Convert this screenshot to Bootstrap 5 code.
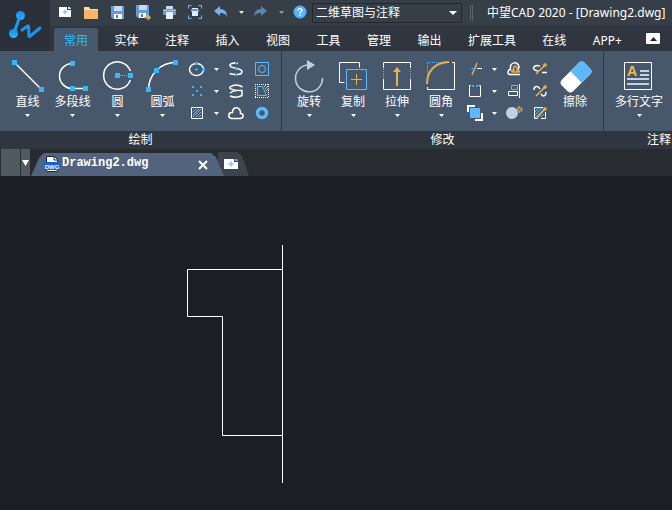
<!DOCTYPE html>
<html lang="zh-CN">
<head>
<meta charset="utf-8">
<meta name="viewport" content="width=device-width, initial-scale=1">
<title>中望CAD 2020 - [Drawing2.dwg]</title>
<link href="https://cdn.jsdelivr.net/npm/bootstrap@5.3.0/dist/css/bootstrap.min.css" rel="stylesheet">
<style>
:root{--panel:#47586d;--bar:#363e47;--strip:#30363f;--blue:#33b9f7;--sky:#5fb8fb;--gold:#eab04a;--pale:#bcd0e6}
body{background:#1b1f24;color:#fff;font:12px/18px "Noto Sans","Noto Sans CJK SC",sans-serif;overflow:hidden}
button{background:none;border:0;padding:0;color:inherit;font:inherit}
svg{display:block;fill:none;flex:none}
.logo-box{width:50px;background:#2a303a}
.quickbar{height:26px;background:var(--bar);padding-left:2px}
.quick-btn{width:26px;height:24px;display:flex;align-items:center;justify-content:center;flex:none}
.caret-btn{width:14px;height:24px;display:flex;align-items:center;justify-content:center;flex:none}
.quick-btn.help{width:24px}
.workspace select{width:150px;height:20px;appearance:none;background:#363e47;border:1px solid #23282f;color:#fff;padding:0 20px 0 3px;font:12px/18px "Noto Sans","Noto Sans CJK SC",sans-serif}
.workspace svg{position:absolute;right:5px;top:8px;pointer-events:none}
.grip{width:3px;height:16px;border:solid #5a626c;border-width:0 1px;margin:0 14px 0 8px;flex:none}
.tabrow{height:25px;background:var(--strip);padding-left:4px}
.ribbon-tabs{max-width:578px}
.ribbon-tabs button{padding:3px 10px 0;height:23px;border-radius:3px 3px 0 0;line-height:20px}
.ribbon-tabs .current{background:var(--panel);color:var(--blue)}
.collapse-btn{width:14px;height:11px;background:#fff;border-radius:1px;margin:7px 12px 7px 14px}
.panel-box{border-right:1px solid #30363f}
.panel-body{background:var(--panel);height:80px;padding:7px 6px 0 5px}
.panel-name{background:var(--strip);height:18px;line-height:18px;text-align:center}
.annotate-box{min-width:110px}
.big-tool{display:flex;flex-direction:column;align-items:center}
.big-tool .caret{margin-top:3px}
.tool-grid{display:grid;grid-template-columns:24px 14px 26px 26px;grid-auto-rows:22px}
.tool-grid button{display:flex;align-items:center;justify-content:center}
.docbar{height:27px;background:#282b30;padding-left:1px}
.doc-block{width:19px;background:#4f5b60;margin-right:1px}
.doc-menu{width:9px;background:#4f5b60;display:flex;align-items:center;justify-content:center;margin-right:1px}
.doc-tab{position:relative;z-index:1;width:193px;height:23px;background:#52647d;padding:0 16px 0 13px;clip-path:polygon(0 100%,8px 5px,13px 0,calc(100% - 13px) 0,calc(100% - 8px) 4px,100% 100%)}
.doc-name{font:bold 12px/20px "Liberation Mono",monospace;padding-left:2px}
.doc-new{width:31px;height:24px;background:#3d444d;margin-left:-6px;padding-right:6px;clip-path:polygon(0 0,19px 0,24px 4px,100% 100%,0 100%);display:flex;align-items:center;justify-content:center}
.drawing-area{padding:69px 0 0 187px}
.s{stroke:#fff}.b{stroke:var(--sky)}.g{stroke:var(--gold)}.bf{fill:var(--blue)}
</style>
<script src="https://cdn.jsdelivr.net/npm/bootstrap@5.3.0/dist/js/bootstrap.bundle.min.js"></script>
</head>
<body>
<header class="d-flex">
  <div class="logo-box flex-shrink-0">
    <svg width="50" height="51" viewBox="0 0 50 51"><defs><linearGradient id="lg" x1="0" y1="1" x2="0" y2="0"><stop offset="0" stop-color="#2dbcf8"/><stop offset="1" stop-color="#1687f5"/></linearGradient></defs><g fill="url(#lg)"><circle cx="20.5" cy="15.5" r="4.500"/><circle cx="13.500" cy="33.500" r="4.500"/></g><path d="M20 16L14 33" stroke="#1c9bf6" stroke-width="3"/><path d="M22 30L28.500 25.500L29 37L40 28" stroke="#1c95f0" stroke-width="3" stroke-linecap="round" stroke-linejoin="bevel"/></svg>
  </div>
  <div class="flex-grow-1 overflow-hidden">
    <div class="quickbar d-flex align-items-start text-nowrap">
      <button class="quick-btn" aria-label="新建"><svg width="14" height="12"><path d="M1 1h8v3h4v7H1z" fill="#fff"/><path d="M10 1h2l1 2h-3z" fill="#cfe5f6"/><path d="M7 3.500v5M4.500 6h5" class="b"/></svg></button>
      <button class="quick-btn" aria-label="打开"><svg width="15" height="13"><path d="M0 1h5l1 2h8v10H0z" fill="#f7b56c"/><path d="M0 1h5l1 2h8v1H0z" fill="#fbe3a2"/></svg></button>
      <button class="quick-btn" aria-label="保存"><svg width="13" height="13"><path d="M0 0h13v13H2l-2-2z" fill="#649bd8"/><path d="M3 0h8v5H3z" fill="#c9daf2"/><path d="M3 8h8v5H3z" fill="#fff"/><path d="M5 9h2v3H5z" fill="#4b7db8"/></svg></button>
      <button class="quick-btn" aria-label="另存为"><svg width="15" height="15"><path d="M0 0h13v13H2l-2-2z" fill="#649bd8"/><path d="M3 0h8v5H3z" fill="#c9daf2"/><path d="M3 8h7v5H3z" fill="#fff"/><path d="M5 9h2v3H5z" fill="#4b7db8"/><path d="M8 12.500h6M11.500 10l2.500 2.500-2.500 2.500" stroke="#f0b04f" stroke-width="1.500"/></svg></button>
      <button class="quick-btn" aria-label="打印"><svg width="13" height="13"><path d="M3 0h7v4H3z" fill="#c9daf2"/><path d="M0 3h13v6H0z" fill="#649bd8"/><path d="M1 4h11v1H1z" fill="#a6c9ee"/><path d="M3 6h7v7H3z" fill="#e8f0fb"/></svg></button>
      <button class="quick-btn" aria-label="打印预览"><svg width="14" height="14"><path d="M.5 3.500v-3h3M10.500.5h3v3M13.500 10.500v3h-3M3.500 13.500h-3v-3" stroke="#75b9ee"/><path d="M3 4h8v3H3z" fill="#649bd8"/><path d="M4 3h6v1H4zM4 6h6v5H4z" fill="#dfeafa"/></svg></button>
      <button class="quick-btn" aria-label="撤销"><svg width="14" height="12"><path d="M0 5l6-5v3c5 0 7 3 7 8-1-3-3-4-7-4v3z" fill="#74b3f2"/></svg></button>
      <button class="caret-btn" aria-label="撤销列表"><svg width="5" height="3"><path d="M0 0h5L2.500 3z" fill="#e6e9ee"/></svg></button>
      <button class="quick-btn" aria-label="重做"><svg width="14" height="12"><path d="M13 5L7 0v3C2 3 0 6 0 11c1-3 3-4 7-4v3z" fill="#5f84ab"/></svg></button>
      <button class="caret-btn" aria-label="重做列表"><svg width="5" height="3"><path d="M0 0h5L2.500 3z" fill="#979ca4"/></svg></button>
      <button class="quick-btn help" aria-label="帮助"><svg width="14" height="14"><circle cx="7" cy="7" r="6.500" fill="#55b4fb"/><path d="M5 5.500C5 3 9 3 9 5.300c0 1.300-2 1.400-2 3.200M7 9.500v1.500" stroke="#fff" stroke-width="1.300"/></svg></button>
      <div class="workspace position-relative align-self-center"><select aria-label="工作空间"><option>二维草图与注释</option></select><svg width="8" height="4"><path d="M0 0h8L4 4z" fill="#fff"/></svg></div>
      <div class="grip align-self-center"></div>
      <div class="align-self-center">中望CAD 2020 - [Drawing2.dwg]</div>
    </div>
    <div class="tabrow d-flex">
      <nav class="ribbon-tabs d-flex flex-grow-1 justify-content-between align-items-end text-nowrap" aria-label="功能区">
        <button class="current">常用</button><button>实体</button><button>注释</button><button>插入</button><button>视图</button><button>工具</button><button>管理</button><button>输出</button><button>扩展工具</button><button>在线</button><button>APP+</button>
      </nav>
      <button class="collapse-btn d-flex align-items-center justify-content-center flex-shrink-0" aria-label="收起功能区"><svg width="7" height="4"><path d="M0 4h7L3.500 0z" fill="#23282f"/></svg></button>
    </div>
  </div>
</header>

<main>
<div class="d-flex overflow-hidden text-nowrap">
  <section class="panel-box flex-shrink-0">
    <div class="panel-body d-flex">
      <button class="big-tool"><svg width="45" height="35"><path d="M9.500 4.500l27 27" class="s" stroke-width="1.500"/><path d="M7 2h5v5H7zM34 29h5v5h-5z" class="bf"/></svg><span>直线</span><svg class="caret" width="5" height="3"><path d="M0 0h5L2.500 3z" fill="#fff"/></svg></button>
      <button class="big-tool"><svg width="45" height="35"><path d="M22.500 5.500A13 12.500 0 0 0 22.500 30.500H35" class="s" stroke-width="1.500"/><path d="M20 3h5v5h-5zM20 28h5v5h-5zM33 28h5v5h-5z" class="bf"/></svg><span>多段线</span><svg class="caret" width="5" height="3"><path d="M0 0h5L2.500 3z" fill="#fff"/></svg></button>
      <button class="big-tool"><svg width="45" height="35"><path d="M35.300 13A13.700 13.700 0 1 0 35.300 22" class="s" stroke-width="1.500"/><path d="M25 17.500h8" class="b" stroke-dasharray="1 1"/><path d="M20 15h5v5h-5zM33 15h5v5h-5z" class="bf"/></svg><span>圆</span><svg class="caret" width="5" height="3"><path d="M0 0h5L2.500 3z" fill="#fff"/></svg></button>
      <button class="big-tool"><svg width="45" height="35"><path d="M8.500 31.500A27 27 0 0 1 35.500 4.500" class="s" stroke-width="1.500"/><path d="M6 29h5v5H6zM14 10h5v5h-5zM33 2h5v5h-5z" class="bf"/></svg><span>圆弧</span><svg class="caret" width="5" height="3"><path d="M0 0h5L2.500 3z" fill="#fff"/></svg></button>
      <div class="tool-grid">
        <button aria-label="椭圆"><svg width="20" height="20"><ellipse cx="9.500" cy="10.500" rx="7" ry="6" class="s" stroke-width="1.500"/><path d="M8 3h3v3H8zM15 9h3v3h-3zM9 9h1v3H9zM8 10h3v1H8z" class="bf"/></svg></button>
        <button aria-label="椭圆选项"><svg width="5" height="3"><path d="M0 0h5L2.500 3z" fill="#fff"/></svg></button>
        <button aria-label="样条曲线"><svg width="20" height="20"><path d="M12 4.500C9 4 4 3.500 4 6.500C4 10 16 8.500 16 12.500C16 16.500 8 16 3.500 14.500" class="s" stroke-width="1.600"/><path d="M9 3h2v2H9zM9 9h2v2H9zM9 15h2v2H9z" class="bf"/></svg></button>
        <button aria-label="区域"><svg width="20" height="20"><path d="M3.500 3.500h13v13h-13z" class="b"/><circle cx="10" cy="10" r="3.500" class="b"/></svg></button>
        <button aria-label="点"><svg width="20" height="20"><path d="M5 5h2v2H5zM13 5h2v2h-2zM9 9h2v2H9zM5 13h2v2H5zM13 13h2v2h-2z" class="bf"/></svg></button>
        <button aria-label="点选项"><svg width="5" height="3"><path d="M0 0h5L2.500 3z" fill="#fff"/></svg></button>
        <button aria-label="螺旋"><svg width="20" height="20"><path d="M16.500 6Q10 2 4 6V7.500Q7 9.500 16 9.500V14.500Q10 17.500 4 15M4 12Q7 9.500 11 9.500" class="s" stroke-width="1.500"/></svg></button>
        <button aria-label="边界"><svg width="20" height="20"><path d="M3.500 3v14M3 16.500h14M3 3.500h14M16.500 3v14" class="s" stroke-dasharray="1 1"/><path d="M5.500 5.500h5l4 9h-9z" class="b"/><path d="M12 6l2-2M13 8l3-3M14 10l2-2" class="s" stroke-width=".6"/></svg></button>
        <button aria-label="图案填充"><svg width="20" height="20"><path d="M4.500 4.500h11v11h-11z" class="s"/><path d="M6 9l3-3M6 12l6-6M6 14l8-8M9 14l5-5M12 14l2-2" class="b"/></svg></button>
        <button aria-label="填充选项"><svg width="5" height="3"><path d="M0 0h5L2.500 3z" fill="#fff"/></svg></button>
        <button aria-label="修订云线"><svg width="20" height="20"><path d="M5.500 15.500h9c4-1 3-5 0-5C15 3 6 3 6.500 9.500 2 9 1.500 15 5.500 15.500z" class="s" stroke-width="1.500"/></svg></button>
        <button aria-label="圆环"><svg width="20" height="20"><circle cx="10" cy="10" r="4.500" class="b" stroke-width="3.500"/></svg></button>
      </div>
    </div>
    <div class="panel-name">绘制</div>
  </section>

  <section class="panel-box flex-shrink-0">
    <div class="panel-body d-flex">
      <button class="big-tool"><svg width="44" height="35"><path d="M35.500 20A13.500 13.500 0 1 1 20 7" stroke="var(--pale)" stroke-width="1.500"/><path d="M20 2l8 5-8 5z" fill="var(--pale)"/></svg><span>旋转</span><svg class="caret" width="5" height="3"><path d="M0 0h5L2.500 3z" fill="#fff"/></svg></button>
      <button class="big-tool"><svg width="44" height="35"><path d="M13.500 24.500h-5v-20h20v5" class="s"/><path d="M15.500 11.500h20v20h-20z" class="b"/><path d="M25.500 16v11M20 21.500h11" class="g"/></svg><span>复制</span><svg class="caret" width="5" height="3"><path d="M0 0h5L2.500 3z" fill="#fff"/></svg></button>
      <button class="big-tool"><svg width="44" height="35"><path d="M8.500 10V4.500h27V10M8.500 21v10.500h27V21" class="s"/><path d="M8.500 11v9M35.500 11v9" class="b" stroke-dasharray="1 1"/><path d="M22 28V12" class="g" stroke-width="2"/><path d="M18 14l4-5 4 5z" fill="var(--gold)"/></svg><span>拉伸</span><svg class="caret" width="5" height="3"><path d="M0 0h5L2.500 3z" fill="#fff"/></svg></button>
      <button class="big-tool"><svg width="44" height="35"><path d="M33 4.500h2.500v27h-27V29" class="s"/><path d="M8.500 18V4.500H22" class="b" stroke-dasharray="1 1"/><path d="M8 26C8 13 16 4.500 30 4" class="g" stroke-width="2"/></svg><span>圆角</span><svg class="caret" width="5" height="3"><path d="M0 0h5L2.500 3z" fill="#fff"/></svg></button>
      <div class="tool-grid">
        <button aria-label="修剪"><svg width="20" height="20"><path d="M7 16l5-12" class="g" stroke-width="1.500"/><path d="M12 9.500h5" class="s"/><path d="M5 9.500h5" class="b" stroke-dasharray="1 1"/></svg></button>
        <button aria-label="修剪选项"><svg width="5" height="3"><path d="M0 0h5L2.500 3z" fill="#fff"/></svg></button>
        <button aria-label="偏移"><svg width="20" height="20"><path d="M16 15.500H6C2.500 15 4 10.500 6.500 10.500C5 2 15 2 15 8.500l-1 2" class="s" stroke-width="1.500"/><path d="M8 13c-1-1 1-2 2-2-2-5 4-5 3 0 1 0 3 1 2 2z" class="g" stroke-width="1.500"/></svg></button>
        <button aria-label="打断"><svg width="20" height="20"><path d="M8 12c-8-1-4-7 2-5M12 13.500h5" class="s" stroke-width="1.500"/><path d="M6 15l8-8M13 6h4M15 4v4" class="g" stroke-width="1.500"/></svg></button>
        <button aria-label="拉长"><svg width="20" height="20"><path d="M6 4.500H4.500v11h11v-11H14" class="s"/><path d="M7 4h2v2H7zM11 4h2v2h-2z" class="bf"/></svg></button>
        <button aria-label="拉长选项"><svg width="5" height="3"><path d="M0 0h5L2.500 3z" fill="#fff"/></svg></button>
        <button aria-label="对齐"><svg width="20" height="20"><path d="M15.500 3v14M4.500 10.500h9v4h-9z" class="s"/><path d="M7.500 4.500h6v4h-6z" class="b"/></svg></button>
        <button aria-label="合并"><svg width="20" height="20"><path d="M4 9C4 5 8 4 10 8M11 13c3 4 5 1 5-2" class="s" stroke-width="1.500"/><path d="M6 15l8-8M13 6h4M15 4v4" class="g" stroke-width="1.500"/></svg></button>
        <button aria-label="绘图次序"><svg width="20" height="20"><path d="M2 2h8v2H4v5H2zM16 10h2v8h-8v-2h6z" fill="#fff"/><path d="M5 5h10v10H5z" fill="var(--sky)"/></svg></button>
        <button aria-label="次序选项"><svg width="5" height="3"><path d="M0 0h5L2.500 3z" fill="#fff"/></svg></button>
        <button aria-label="分解"><svg width="20" height="20"><circle cx="8" cy="10" r="6" fill="#c4cfe2"/><circle cx="15.500" cy="6.500" r="1.500" class="g"/><path d="M15.500 3v2M15.500 8v2M12 6.500h2M17 6.500h2M13 4l1 1M18 4l-1 1M13 9l1-1M18 9l-1-1" class="g"/></svg></button>
        <button aria-label="编辑填充"><svg width="20" height="20"><path d="M13 4.500H4.500v11h3M11 15.500h4.500V9" class="s"/><path d="M5 9l4-4M5 12l7-7M5 15l9-9M11 14l3-3" class="b"/><path d="M7 15l7-8M13 6h4M15 4v4" class="g" stroke-width="1.500"/></svg></button>
      </div>
      <button class="big-tool"><svg width="44" height="35"><g transform="rotate(-45 23 19)"><rect x="7" y="11" width="32" height="16" rx="4" fill="#fff"/><path d="M23 11h12a4 4 0 0 1 4 4v8a4 4 0 0 1-4 4H23z" fill="var(--sky)"/></g></svg><span>擦除</span></button>
    </div>
    <div class="panel-name">修改</div>
  </section>

  <section class="annotate-box flex-shrink-0 flex-grow-1">
    <div class="panel-body d-flex">
      <button class="big-tool"><svg width="60" height="35"><path d="M15.500 4.500h27v27h-27z" class="s"/><text x="18" y="18" fill="#f3bd42" font-family="Liberation Sans,sans-serif" font-size="14" font-weight="bold">A</text><path d="M31 13h9M31 17h9M18 21h22M18 26h22" stroke="#c4d0e3" stroke-width="2"/></svg><span>多行文字</span><svg class="caret" width="5" height="3"><path d="M0 0h5L2.500 3z" fill="#fff"/></svg></button>
    </div>
    <div class="panel-name">注释</div>
  </section>
</div>

<div class="docbar d-flex align-items-end">
  <div class="doc-block align-self-stretch"></div>
  <button class="doc-menu align-self-stretch" aria-label="文档列表"><svg width="7" height="6"><path d="M0 0h7L3.500 6z" fill="#fff"/></svg></button>
  <div class="doc-tab d-flex">
    <svg width="16" height="23"><path d="M2.500 3.500h8l3 3v12h-11z" fill="#fff" stroke="#20252c"/><path d="M10 3v4h4" stroke="#20252c"/><rect y="9" width="16" height="8" rx="1" fill="#1263db"/><text x="8" y="15.500" text-anchor="middle" font-family="Liberation Sans,sans-serif" font-size="6" font-weight="bold" fill="#fff">DWG</text></svg>
    <span class="doc-name flex-grow-1">Drawing2.dwg</span>
    <button aria-label="关闭"><svg width="10" height="10"><path d="M1 1l8 8M9 1L1 9" class="s" stroke-width="2"/></svg></button>
  </div>
  <button class="doc-new" aria-label="新建图形"><svg width="16" height="12"><path d="M1 1h10v3h4v7H1z" fill="#fff"/><path d="M12 1h2l1 2h-3z" fill="#5fb8fb"/><path d="M8 3v6M5 6h6" class="b"/></svg></button>
</div>

<div class="drawing-area">
  <svg width="96" height="238" role="img" aria-label="图形"><path d="M95.500 0v238M95 24.500H.5v47h35v119H95" class="s"/></svg>
</div>
</main>
</body>
</html>
